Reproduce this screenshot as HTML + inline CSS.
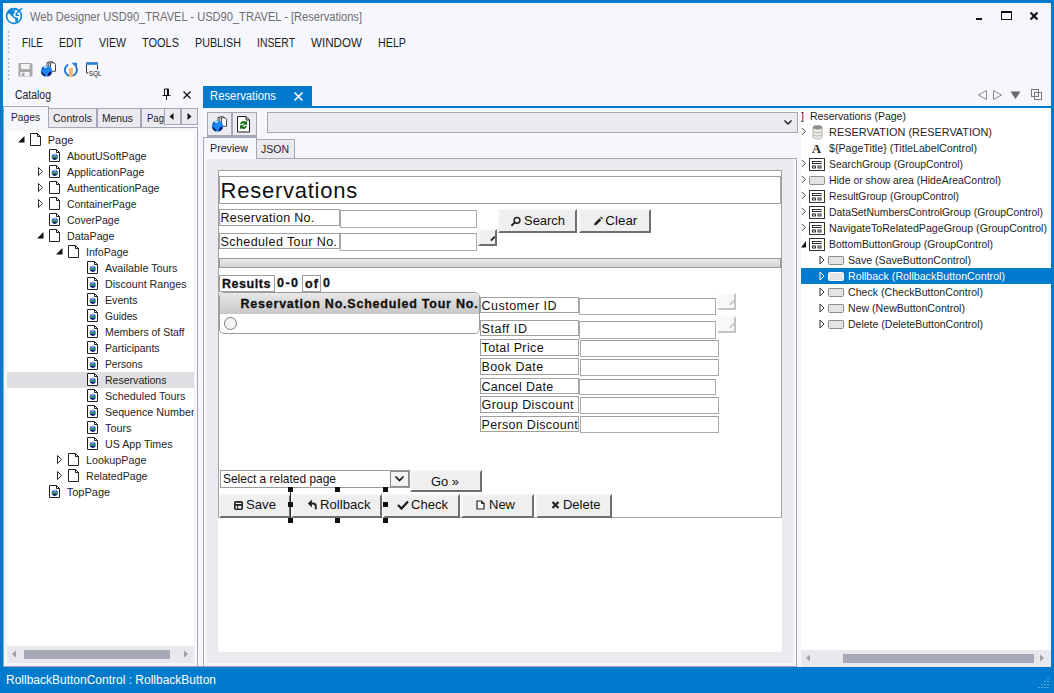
<!DOCTYPE html>
<html><head><meta charset="utf-8"><title>Web Designer</title>
<style>
html,body{margin:0;padding:0}
body{width:1054px;height:693px;overflow:hidden;background:#007acc;position:relative;font-family:'Liberation Sans',sans-serif}
div,span.t,svg{position:absolute;display:block}
span.t{white-space:pre;font-family:'Liberation Sans',sans-serif;transform-origin:0 0}
</style></head><body>
<div style="left:3px;top:3px;width:1048px;height:664px;background:#f6f6fd"></div>
<svg style="left:0px;top:0px" width="30" height="30" viewBox="0 0 30 30"><circle cx="14" cy="16" r="7.400" fill="#fff" stroke="#0f86d6" stroke-width="1.700"/>
<path d="M7.500 12 L10.500 8.800 L13 8.600 L12.500 10 L15 10.500 L14.500 13 L13.200 14.500 L14 16.500 L16.500 17.500 L18.300 18.300 L18 21 L16.500 22.800 L15.200 21.500 L15.300 19 L12.800 17.300 L9.200 13.500 L7.500 14 Z" fill="#0f86d6"/>
<path d="M13.500 9 L17.500 9.300 L16.500 10.500 L14.500 10.300Z" fill="#0f86d6"/>
<path d="M21.800 8.200 L17 13" stroke="#0f86d6" stroke-width="1.600"/><path d="M16.300 12.500 V15.300 H19" fill="none" stroke="#0f86d6" stroke-width="1.500"/></svg>
<span class="t" style="left:30px;top:8.5px;font-size:12.5px;line-height:16px;color:#6e6e6e;transform:scaleX(0.8888);">Web Designer USD90_TRAVEL - USD90_TRAVEL - [Reservations]</span>
<div style="left:976px;top:17.5px;width:6px;height:2px;background:#111"></div>
<div style="left:1001px;top:11px;width:11px;height:9px;box-sizing:border-box;border:1px solid #111;border-top-width:2px"></div>
<svg style="left:1029px;top:11px" width="10" height="10" viewBox="0 0 10 10"><path d="M1.5 1.5 L8.5 8.5 M8.5 1.5 L1.5 8.5" stroke="#111" stroke-width="2.2"/></svg>
<span class="t" style="left:22px;top:35.0px;font-size:12px;line-height:16px;color:#1e1e1e;transform:scaleX(0.8286);">FILE</span>
<span class="t" style="left:59px;top:35.0px;font-size:12px;line-height:16px;color:#1e1e1e;transform:scaleX(0.8777);">EDIT</span>
<span class="t" style="left:99px;top:35.0px;font-size:12px;line-height:16px;color:#1e1e1e;transform:scaleX(0.8803);">VIEW</span>
<span class="t" style="left:142px;top:35.0px;font-size:12px;line-height:16px;color:#1e1e1e;transform:scaleX(0.9143);">TOOLS</span>
<span class="t" style="left:195px;top:35.0px;font-size:12px;line-height:16px;color:#1e1e1e;transform:scaleX(0.8956);">PUBLISH</span>
<span class="t" style="left:257px;top:35.0px;font-size:12px;line-height:16px;color:#1e1e1e;transform:scaleX(0.8676);">INSERT</span>
<span class="t" style="left:311px;top:35.0px;font-size:12px;line-height:16px;color:#1e1e1e;transform:scaleX(0.9685);">WINDOW</span>
<span class="t" style="left:378px;top:35.0px;font-size:12px;line-height:16px;color:#1e1e1e;transform:scaleX(0.8929);">HELP</span>
<div style="left:6.5px;top:29.5px;width:3px;height:24px;background-image:radial-gradient(circle,#bcbcc6 0.9px,transparent 1.2px);background-size:3px 4px"></div>
<div style="left:6.5px;top:57px;width:3px;height:24px;background-image:radial-gradient(circle,#bcbcc6 0.9px,transparent 1.2px);background-size:3px 4px"></div>
<svg style="left:18px;top:62px" width="15" height="15" viewBox="0 0 15 15"><path d="M0.5 1h12.5l1.500 1.500v12h-14z" fill="#a8a8a8"/><rect x="3" y="2" width="8.500" height="5" fill="#f3f3f3"/><rect x="11" y="2" width="1" height="1.500" fill="#f3f3f3"/><rect x="2.500" y="10" width="9" height="4" fill="#f3f3f3"/><rect x="4" y="10.800" width="2.500" height="3.200" fill="#a8a8a8"/></svg>
<svg style="left:40px;top:61px" width="17" height="17" viewBox="0 0 17 17"><path d="M7 1.500h4l1.500 1.500v6h-5.500z" fill="#fff" stroke="#333" stroke-width="0.900"/><path d="M8.800 0.800h4l1.500 1.500v6.500h-5.500z" fill="#fff" stroke="#333" stroke-width="0.900"/><path d="M10.500 1.800h3.500l1.500 1.500v7h-5z" fill="#fff" stroke="#333" stroke-width="0.900"/>
<circle cx="6.500" cy="10" r="5.600" fill="#1b84ec"/><path d="M1 10.500c1.500 .5 2 2 3.500 2.500l1 2.500a5.600 5.600 0 0 1-4.500-5Z" fill="#0a1a78"/><path d="M8 12.500l2.500-2 1.400 1.200a5.600 5.600 0 0 1-4.400 3.800Z" fill="#0a1a78"/><path d="M2 6.500l1.500-.5 .5 1.500-1.500 1Z" fill="#123a9a"/><path d="M3.500 6.200c1-1.200 2.500-1.700 3.500-1.200s0 1.700-1.200 2s-2.300 0-2.300-.8Z" fill="#a8dcff"/></svg>
<svg style="left:63px;top:62px" width="16" height="16" viewBox="0 0 16 16"><path d="M5.200 2.600A6 6 0 1 0 12.800 4.500" fill="none" stroke="#2a7bd0" stroke-width="2"/><path d="M8.500 0.800h5.500v5.500Z" fill="#2a7bd0"/><rect x="6" y="6" width="3.800" height="9" fill="#f7b76b"/></svg>
<svg style="left:85px;top:61px" width="19" height="17" viewBox="0 0 19 17"><path d="M1 2.500h12" stroke="#2a7bd0" stroke-width="2.600"/><path d="M1.500 4v8h2M12.500 4v4.500" fill="none" stroke="#333" stroke-width="1"/></svg>
<span class="t" style="left:89px;top:69.7px;font-size:7.6px;line-height:8px;color:#111;transform:scaleX(0.8222);">SQL</span>
<span class="t" style="left:15px;top:87.0px;font-size:12px;line-height:16px;color:#1e1e1e;transform:scaleX(0.8701);">Catalog</span>
<svg style="left:161.5px;top:88px" width="9" height="13" viewBox="0 0 9 13"><path d="M2.500 1h4v6.500h-4z M0.500 7.500h8 M4.500 7.500v4.500" fill="none" stroke="#111" stroke-width="1"/><path d="M5.700 1v6.500" stroke="#111" stroke-width="1.600"/></svg>
<svg style="left:182px;top:90px" width="10" height="10" viewBox="0 0 10 10"><path d="M1.500 1.500 L8.500 8.500 M8.500 1.500 L1.500 8.500" stroke="#111" stroke-width="1.300"/></svg>
<div style="left:3px;top:127px;width:195px;height:539px;box-sizing:border-box;border:1px solid #a5a7b6;border-bottom:none"></div>
<div style="left:48px;top:108px;width:49px;height:20px;box-sizing:border-box;border:1px solid #a5a7b6;background:#eaeaef"></div>
<span class="t" style="left:53px;top:111.0px;font-size:11px;line-height:14px;color:#1e1e1e;transform:scaleX(0.9519);">Controls</span>
<div style="left:97px;top:108px;width:44px;height:20px;box-sizing:border-box;border:1px solid #a5a7b6;background:#eaeaef"></div>
<span class="t" style="left:102px;top:111.0px;font-size:11px;line-height:14px;color:#1e1e1e;transform:scaleX(0.9385);">Menus</span>
<div style="left:141px;top:108px;width:24px;height:20px;box-sizing:border-box;border:1px solid #a5a7b6;background:#eaeaef;border-right:none"></div>
<span class="t" style="left:147px;top:111.0px;font-size:11px;line-height:14px;color:#1e1e1e;transform:scaleX(0.8683);">Pag</span>
<div style="left:3px;top:106px;width:46px;height:22px;box-sizing:border-box;border:1px solid #a5a7b6;border-bottom:none;background:#f6f6fd"></div>
<span class="t" style="left:11px;top:110.0px;font-size:11px;line-height:14px;color:#1e1e1e;transform:scaleX(0.9294);">Pages</span>
<div style="left:164px;top:108px;width:17px;height:17px;box-sizing:border-box;border:1px solid #a5a7b6;background:#eaeaef"></div>
<svg style="left:164px;top:108.5px" width="16" height="16" viewBox="0 0 16 16"><path d="M9.500 4 L5.500 7.500 L9.500 11Z" fill="#111"/></svg>
<div style="left:181px;top:108px;width:17px;height:17px;box-sizing:border-box;border:1px solid #a5a7b6;background:#eaeaef"></div>
<svg style="left:181px;top:108.5px" width="16" height="16" viewBox="0 0 16 16"><path d="M6.500 4 L10.500 7.500 L6.500 11Z" fill="#111"/></svg>
<div style="left:7px;top:131px;width:187px;height:515px;background:#fff"></div>
<div style="left:7px;top:372px;width:187px;height:16px;background:#dfdfe3"></div>
<svg style="left:18px;top:136px" width="7" height="7" viewBox="0 0 7 7"><path d="M6.500 0v6.500h-6.500z" fill="#111"/></svg>
<svg style="left:29.5px;top:133px" width="11" height="13" viewBox="0 0 11 13"><path d="M0.500 0.500h7l3 3v9h-10z" fill="#fff" stroke="#222" stroke-width="1"/><path d="M7.500 0.500v3h3" fill="none" stroke="#222" stroke-width="1"/></svg>
<span class="t" style="left:47.7px;top:133.0px;font-size:11px;line-height:14px;color:#1e1e1e;">Page</span>
<svg style="left:48.5px;top:149px" width="11" height="13" viewBox="0 0 11 13"><path d="M0.500 0.500h7l3 3v9h-10z" fill="#fff" stroke="#222" stroke-width="1"/><path d="M7.500 0.500v3h3" fill="none" stroke="#222" stroke-width="1"/><circle cx="5.700" cy="7.800" r="3" fill="#1d4fc0"/><path d="M2.900 7.300h5.600v1.300h-5.600z" fill="#3fae45"/><path d="M3 9a3 3 0 0 0 5.400 0Z" fill="#0a1a66"/><path d="M4.200 5.400h2.800v1h-2.800z" fill="#e8f4ff"/></svg>
<span class="t" style="left:66.7px;top:149.0px;font-size:11px;line-height:14px;color:#1e1e1e;transform:scaleX(0.9701);">AboutUSoftPage</span>
<svg style="left:37.7px;top:166.5px" width="6" height="10" viewBox="0 0 6 10"><path d="M0.500 0.500l4 4-4 4z" fill="#fff" stroke="#333" stroke-width="1"/></svg>
<svg style="left:48.5px;top:165px" width="11" height="13" viewBox="0 0 11 13"><path d="M0.500 0.500h7l3 3v9h-10z" fill="#fff" stroke="#222" stroke-width="1"/><path d="M7.500 0.500v3h3" fill="none" stroke="#222" stroke-width="1"/><circle cx="5.700" cy="7.800" r="3" fill="#1d4fc0"/><path d="M2.900 7.300h5.600v1.300h-5.600z" fill="#3fae45"/><path d="M3 9a3 3 0 0 0 5.400 0Z" fill="#0a1a66"/><path d="M4.200 5.400h2.800v1h-2.800z" fill="#e8f4ff"/></svg>
<span class="t" style="left:66.7px;top:165.0px;font-size:11px;line-height:14px;color:#1e1e1e;transform:scaleX(0.9747);">ApplicationPage</span>
<svg style="left:37.7px;top:182.5px" width="6" height="10" viewBox="0 0 6 10"><path d="M0.500 0.500l4 4-4 4z" fill="#fff" stroke="#333" stroke-width="1"/></svg>
<svg style="left:48.5px;top:181px" width="11" height="13" viewBox="0 0 11 13"><path d="M0.500 0.500h7l3 3v9h-10z" fill="#fff" stroke="#222" stroke-width="1"/><path d="M7.500 0.500v3h3" fill="none" stroke="#222" stroke-width="1"/></svg>
<span class="t" style="left:66.7px;top:181.0px;font-size:11px;line-height:14px;color:#1e1e1e;transform:scaleX(0.9694);">AuthenticationPage</span>
<svg style="left:37.7px;top:198.5px" width="6" height="10" viewBox="0 0 6 10"><path d="M0.500 0.500l4 4-4 4z" fill="#fff" stroke="#333" stroke-width="1"/></svg>
<svg style="left:48.5px;top:197px" width="11" height="13" viewBox="0 0 11 13"><path d="M0.500 0.500h7l3 3v9h-10z" fill="#fff" stroke="#222" stroke-width="1"/><path d="M7.500 0.500v3h3" fill="none" stroke="#222" stroke-width="1"/></svg>
<span class="t" style="left:66.7px;top:197.0px;font-size:11px;line-height:14px;color:#1e1e1e;transform:scaleX(0.9470);">ContainerPage</span>
<svg style="left:48.5px;top:213px" width="11" height="13" viewBox="0 0 11 13"><path d="M0.500 0.500h7l3 3v9h-10z" fill="#fff" stroke="#222" stroke-width="1"/><path d="M7.500 0.500v3h3" fill="none" stroke="#222" stroke-width="1"/><circle cx="5.700" cy="7.800" r="3" fill="#1d4fc0"/><path d="M2.900 7.300h5.600v1.300h-5.600z" fill="#3fae45"/><path d="M3 9a3 3 0 0 0 5.400 0Z" fill="#0a1a66"/><path d="M4.200 5.400h2.800v1h-2.800z" fill="#e8f4ff"/></svg>
<span class="t" style="left:66.7px;top:213.0px;font-size:11px;line-height:14px;color:#1e1e1e;transform:scaleX(0.9537);">CoverPage</span>
<svg style="left:37px;top:232px" width="7" height="7" viewBox="0 0 7 7"><path d="M6.500 0v6.500h-6.500z" fill="#111"/></svg>
<svg style="left:48.5px;top:229px" width="11" height="13" viewBox="0 0 11 13"><path d="M0.500 0.500h7l3 3v9h-10z" fill="#fff" stroke="#222" stroke-width="1"/><path d="M7.500 0.500v3h3" fill="none" stroke="#222" stroke-width="1"/></svg>
<span class="t" style="left:66.7px;top:229.0px;font-size:11px;line-height:14px;color:#1e1e1e;transform:scaleX(0.9706);">DataPage</span>
<svg style="left:56px;top:248px" width="7" height="7" viewBox="0 0 7 7"><path d="M6.500 0v6.500h-6.500z" fill="#111"/></svg>
<svg style="left:67.5px;top:245px" width="11" height="13" viewBox="0 0 11 13"><path d="M0.500 0.500h7l3 3v9h-10z" fill="#fff" stroke="#222" stroke-width="1"/><path d="M7.500 0.500v3h3" fill="none" stroke="#222" stroke-width="1"/></svg>
<span class="t" style="left:85.7px;top:245.0px;font-size:11px;line-height:14px;color:#1e1e1e;transform:scaleX(0.9649);">InfoPage</span>
<svg style="left:86.5px;top:261px" width="11" height="13" viewBox="0 0 11 13"><path d="M0.500 0.500h7l3 3v9h-10z" fill="#fff" stroke="#222" stroke-width="1"/><path d="M7.500 0.500v3h3" fill="none" stroke="#222" stroke-width="1"/><circle cx="5.700" cy="7.800" r="3" fill="#1d4fc0"/><path d="M2.900 7.300h5.600v1.300h-5.600z" fill="#3fae45"/><path d="M3 9a3 3 0 0 0 5.400 0Z" fill="#0a1a66"/><path d="M4.200 5.400h2.800v1h-2.800z" fill="#e8f4ff"/></svg>
<span class="t" style="left:104.7px;top:261.0px;font-size:11px;line-height:14px;color:#1e1e1e;transform:scaleX(0.9770);">Available Tours</span>
<svg style="left:86.5px;top:277px" width="11" height="13" viewBox="0 0 11 13"><path d="M0.500 0.500h7l3 3v9h-10z" fill="#fff" stroke="#222" stroke-width="1"/><path d="M7.500 0.500v3h3" fill="none" stroke="#222" stroke-width="1"/><circle cx="5.700" cy="7.800" r="3" fill="#1d4fc0"/><path d="M2.900 7.300h5.600v1.300h-5.600z" fill="#3fae45"/><path d="M3 9a3 3 0 0 0 5.400 0Z" fill="#0a1a66"/><path d="M4.200 5.400h2.800v1h-2.800z" fill="#e8f4ff"/></svg>
<span class="t" style="left:104.7px;top:277.0px;font-size:11px;line-height:14px;color:#1e1e1e;transform:scaleX(0.9728);">Discount Ranges</span>
<svg style="left:86.5px;top:293px" width="11" height="13" viewBox="0 0 11 13"><path d="M0.500 0.500h7l3 3v9h-10z" fill="#fff" stroke="#222" stroke-width="1"/><path d="M7.500 0.500v3h3" fill="none" stroke="#222" stroke-width="1"/><circle cx="5.700" cy="7.800" r="3" fill="#1d4fc0"/><path d="M2.900 7.300h5.600v1.300h-5.600z" fill="#3fae45"/><path d="M3 9a3 3 0 0 0 5.400 0Z" fill="#0a1a66"/><path d="M4.200 5.400h2.800v1h-2.800z" fill="#e8f4ff"/></svg>
<span class="t" style="left:104.7px;top:293.0px;font-size:11px;line-height:14px;color:#1e1e1e;transform:scaleX(0.9661);">Events</span>
<svg style="left:86.5px;top:309px" width="11" height="13" viewBox="0 0 11 13"><path d="M0.500 0.500h7l3 3v9h-10z" fill="#fff" stroke="#222" stroke-width="1"/><path d="M7.500 0.500v3h3" fill="none" stroke="#222" stroke-width="1"/><circle cx="5.700" cy="7.800" r="3" fill="#1d4fc0"/><path d="M2.900 7.300h5.600v1.300h-5.600z" fill="#3fae45"/><path d="M3 9a3 3 0 0 0 5.400 0Z" fill="#0a1a66"/><path d="M4.200 5.400h2.800v1h-2.800z" fill="#e8f4ff"/></svg>
<span class="t" style="left:104.7px;top:309.0px;font-size:11px;line-height:14px;color:#1e1e1e;transform:scaleX(0.9323);">Guides</span>
<svg style="left:86.5px;top:325px" width="11" height="13" viewBox="0 0 11 13"><path d="M0.500 0.500h7l3 3v9h-10z" fill="#fff" stroke="#222" stroke-width="1"/><path d="M7.500 0.500v3h3" fill="none" stroke="#222" stroke-width="1"/><circle cx="5.700" cy="7.800" r="3" fill="#1d4fc0"/><path d="M2.900 7.300h5.600v1.300h-5.600z" fill="#3fae45"/><path d="M3 9a3 3 0 0 0 5.400 0Z" fill="#0a1a66"/><path d="M4.200 5.400h2.800v1h-2.800z" fill="#e8f4ff"/></svg>
<span class="t" style="left:104.7px;top:325.0px;font-size:11px;line-height:14px;color:#1e1e1e;transform:scaleX(0.9514);">Members of Staff</span>
<svg style="left:86.5px;top:341px" width="11" height="13" viewBox="0 0 11 13"><path d="M0.500 0.500h7l3 3v9h-10z" fill="#fff" stroke="#222" stroke-width="1"/><path d="M7.500 0.500v3h3" fill="none" stroke="#222" stroke-width="1"/><circle cx="5.700" cy="7.800" r="3" fill="#1d4fc0"/><path d="M2.900 7.300h5.600v1.300h-5.600z" fill="#3fae45"/><path d="M3 9a3 3 0 0 0 5.400 0Z" fill="#0a1a66"/><path d="M4.200 5.400h2.800v1h-2.800z" fill="#e8f4ff"/></svg>
<span class="t" style="left:104.7px;top:341.0px;font-size:11px;line-height:14px;color:#1e1e1e;transform:scaleX(0.9481);">Participants</span>
<svg style="left:86.5px;top:357px" width="11" height="13" viewBox="0 0 11 13"><path d="M0.500 0.500h7l3 3v9h-10z" fill="#fff" stroke="#222" stroke-width="1"/><path d="M7.500 0.500v3h3" fill="none" stroke="#222" stroke-width="1"/><circle cx="5.700" cy="7.800" r="3" fill="#1d4fc0"/><path d="M2.900 7.300h5.600v1.300h-5.600z" fill="#3fae45"/><path d="M3 9a3 3 0 0 0 5.400 0Z" fill="#0a1a66"/><path d="M4.200 5.400h2.800v1h-2.800z" fill="#e8f4ff"/></svg>
<span class="t" style="left:104.7px;top:357.0px;font-size:11px;line-height:14px;color:#1e1e1e;transform:scaleX(0.9292);">Persons</span>
<svg style="left:86.5px;top:373px" width="11" height="13" viewBox="0 0 11 13"><path d="M0.500 0.500h7l3 3v9h-10z" fill="#fff" stroke="#222" stroke-width="1"/><path d="M7.500 0.500v3h3" fill="none" stroke="#222" stroke-width="1"/><circle cx="5.700" cy="7.800" r="3" fill="#1d4fc0"/><path d="M2.900 7.300h5.600v1.300h-5.600z" fill="#3fae45"/><path d="M3 9a3 3 0 0 0 5.400 0Z" fill="#0a1a66"/><path d="M4.200 5.400h2.800v1h-2.800z" fill="#e8f4ff"/></svg>
<span class="t" style="left:104.7px;top:373.0px;font-size:11px;line-height:14px;color:#1e1e1e;transform:scaleX(0.9579);">Reservations</span>
<svg style="left:86.5px;top:389px" width="11" height="13" viewBox="0 0 11 13"><path d="M0.500 0.500h7l3 3v9h-10z" fill="#fff" stroke="#222" stroke-width="1"/><path d="M7.500 0.500v3h3" fill="none" stroke="#222" stroke-width="1"/><circle cx="5.700" cy="7.800" r="3" fill="#1d4fc0"/><path d="M2.900 7.300h5.600v1.300h-5.600z" fill="#3fae45"/><path d="M3 9a3 3 0 0 0 5.400 0Z" fill="#0a1a66"/><path d="M4.200 5.400h2.800v1h-2.800z" fill="#e8f4ff"/></svg>
<span class="t" style="left:104.7px;top:389.0px;font-size:11px;line-height:14px;color:#1e1e1e;transform:scaleX(0.9847);">Scheduled Tours</span>
<svg style="left:86.5px;top:405px" width="11" height="13" viewBox="0 0 11 13"><path d="M0.500 0.500h7l3 3v9h-10z" fill="#fff" stroke="#222" stroke-width="1"/><path d="M7.500 0.500v3h3" fill="none" stroke="#222" stroke-width="1"/><circle cx="5.700" cy="7.800" r="3" fill="#1d4fc0"/><path d="M2.900 7.300h5.600v1.300h-5.600z" fill="#3fae45"/><path d="M3 9a3 3 0 0 0 5.400 0Z" fill="#0a1a66"/><path d="M4.200 5.400h2.800v1h-2.800z" fill="#e8f4ff"/></svg>
<span class="t" style="left:104.7px;top:405.0px;font-size:11px;line-height:14px;color:#1e1e1e;transform:scaleX(0.9756);">Sequence Number</span>
<svg style="left:86.5px;top:421px" width="11" height="13" viewBox="0 0 11 13"><path d="M0.500 0.500h7l3 3v9h-10z" fill="#fff" stroke="#222" stroke-width="1"/><path d="M7.500 0.500v3h3" fill="none" stroke="#222" stroke-width="1"/><circle cx="5.700" cy="7.800" r="3" fill="#1d4fc0"/><path d="M2.900 7.300h5.600v1.300h-5.600z" fill="#3fae45"/><path d="M3 9a3 3 0 0 0 5.400 0Z" fill="#0a1a66"/><path d="M4.200 5.400h2.800v1h-2.800z" fill="#e8f4ff"/></svg>
<span class="t" style="left:104.7px;top:421.0px;font-size:11px;line-height:14px;color:#1e1e1e;transform:scaleX(0.9849);">Tours</span>
<svg style="left:86.5px;top:437px" width="11" height="13" viewBox="0 0 11 13"><path d="M0.500 0.500h7l3 3v9h-10z" fill="#fff" stroke="#222" stroke-width="1"/><path d="M7.500 0.500v3h3" fill="none" stroke="#222" stroke-width="1"/><circle cx="5.700" cy="7.800" r="3" fill="#1d4fc0"/><path d="M2.900 7.300h5.600v1.300h-5.600z" fill="#3fae45"/><path d="M3 9a3 3 0 0 0 5.400 0Z" fill="#0a1a66"/><path d="M4.200 5.400h2.800v1h-2.800z" fill="#e8f4ff"/></svg>
<span class="t" style="left:104.7px;top:437.0px;font-size:11px;line-height:14px;color:#1e1e1e;transform:scaleX(0.9684);">US App Times</span>
<svg style="left:56.7px;top:454.5px" width="6" height="10" viewBox="0 0 6 10"><path d="M0.500 0.500l4 4-4 4z" fill="#fff" stroke="#333" stroke-width="1"/></svg>
<svg style="left:67.5px;top:453px" width="11" height="13" viewBox="0 0 11 13"><path d="M0.500 0.500h7l3 3v9h-10z" fill="#fff" stroke="#222" stroke-width="1"/><path d="M7.500 0.500v3h3" fill="none" stroke="#222" stroke-width="1"/></svg>
<span class="t" style="left:85.7px;top:453.0px;font-size:11px;line-height:14px;color:#1e1e1e;transform:scaleX(0.9793);">LookupPage</span>
<svg style="left:56.7px;top:470.5px" width="6" height="10" viewBox="0 0 6 10"><path d="M0.500 0.500l4 4-4 4z" fill="#fff" stroke="#333" stroke-width="1"/></svg>
<svg style="left:67.5px;top:469px" width="11" height="13" viewBox="0 0 11 13"><path d="M0.500 0.500h7l3 3v9h-10z" fill="#fff" stroke="#222" stroke-width="1"/><path d="M7.500 0.500v3h3" fill="none" stroke="#222" stroke-width="1"/></svg>
<span class="t" style="left:85.7px;top:469.0px;font-size:11px;line-height:14px;color:#1e1e1e;transform:scaleX(0.9668);">RelatedPage</span>
<svg style="left:48.5px;top:485px" width="11" height="13" viewBox="0 0 11 13"><path d="M0.500 0.500h7l3 3v9h-10z" fill="#fff" stroke="#222" stroke-width="1"/><path d="M7.500 0.500v3h3" fill="none" stroke="#222" stroke-width="1"/><circle cx="5.700" cy="7.800" r="3" fill="#1d4fc0"/><path d="M2.900 7.300h5.600v1.300h-5.600z" fill="#3fae45"/><path d="M3 9a3 3 0 0 0 5.400 0Z" fill="#0a1a66"/><path d="M4.200 5.400h2.800v1h-2.800z" fill="#e8f4ff"/></svg>
<span class="t" style="left:66.7px;top:485.0px;font-size:11px;line-height:14px;color:#1e1e1e;letter-spacing:0.009px;">TopPage</span>
<div style="left:194px;top:131px;width:2px;height:515px;background:#f6f6fd"></div>
<div style="left:7px;top:646px;width:187px;height:17px;background:#e8e8ed"></div>
<div style="left:24px;top:650px;width:146px;height:9px;background:#a7a9b6"></div>
<svg style="left:10px;top:649px" width="8" height="10" viewBox="0 0 8 10"><path d="M6 1.500 L2 5 L6 8.500Z" fill="#a0a0aa"/></svg>
<svg style="left:182px;top:649px" width="8" height="10" viewBox="0 0 8 10"><path d="M2 1.500 L6 5 L2 8.500Z" fill="#a0a0aa"/></svg>
<div style="left:203px;top:86px;width:109px;height:21px;background:#007acc"></div>
<span class="t" style="left:210px;top:88.0px;font-size:12px;line-height:16px;color:#fff;transform:scaleX(0.9424);">Reservations</span>
<svg style="left:293px;top:91px" width="11" height="11" viewBox="0 0 11 11"><path d="M1.500 1.500 L9.500 9.500 M9.500 1.500 L1.500 9.500" stroke="#fff" stroke-width="1.600"/></svg>
<div style="left:203px;top:106px;width:848px;height:2px;background:#007acc"></div>
<svg style="left:977px;top:89px" width="11" height="12" viewBox="0 0 11 12"><path d="M9.500 1.500 L1.500 6 L9.500 10.500Z" fill="none" stroke="#8a8a8a" stroke-width="1"/></svg>
<svg style="left:992px;top:89px" width="11" height="12" viewBox="0 0 11 12"><path d="M1.500 1.500 L9.500 6 L1.500 10.500Z" fill="none" stroke="#8a8a8a" stroke-width="1"/></svg>
<svg style="left:1010px;top:91px" width="11" height="8" viewBox="0 0 11 8"><path d="M0.500 0.500h10l-5 7.500z" fill="#6a6a6a"/></svg>
<svg style="left:1031px;top:89px" width="12" height="12" viewBox="0 0 12 12"><rect x="0.500" y="0.500" width="7" height="7" fill="none" stroke="#777" stroke-width="1"/><rect x="3.500" y="3.500" width="7" height="7" fill="none" stroke="#777" stroke-width="1"/></svg>
<div style="left:203px;top:137px;width:1px;height:530px;background:#a5a7b6"></div>
<div style="left:207px;top:112px;width:25px;height:25px;box-sizing:border-box;border:1px solid #a5a7b6;border-bottom-width:2px;background:#eaeaef"></div>
<div style="left:232px;top:112px;width:25px;height:25px;box-sizing:border-box;border:1px solid #a5a7b6;border-bottom-width:2px;background:#eaeaef"></div>
<svg style="left:211px;top:116px" width="17" height="17" viewBox="0 0 17 17"><path d="M7 1.500h4l1.500 1.500v6h-5.500z" fill="#fff" stroke="#333" stroke-width="0.900"/><path d="M8.800 0.800h4l1.500 1.500v6.500h-5.500z" fill="#fff" stroke="#333" stroke-width="0.900"/><path d="M10.500 1.800h3.500l1.500 1.500v7h-5z" fill="#fff" stroke="#333" stroke-width="0.900"/>
<circle cx="6.500" cy="10" r="5.600" fill="#1b84ec"/><path d="M1 10.500c1.500 .5 2 2 3.500 2.500l1 2.500a5.600 5.600 0 0 1-4.500-5Z" fill="#0a1a78"/><path d="M8 12.500l2.500-2 1.400 1.200a5.600 5.600 0 0 1-4.400 3.800Z" fill="#0a1a78"/><path d="M2 6.500l1.500-.5 .5 1.500-1.500 1Z" fill="#123a9a"/><path d="M3.500 6.200c1-1.200 2.500-1.700 3.500-1.200s0 1.700-1.200 2s-2.300 0-2.300-.8Z" fill="#a8dcff"/></svg>
<svg style="left:237px;top:115.5px" width="14" height="17" viewBox="0 0 14 17"><path d="M0.500 0.500h8.500l3.500 3.500v12h-12z" fill="#fff" stroke="#222" stroke-width="1"/><path d="M9 0.500v3.500h3.500" fill="none" stroke="#222"/><path d="M3 8.200a3.600 3.600 0 0 1 5.800-2.400l1.200-1.200v4.200h-4.200l1.300-1.300a2 2 0 0 0-2.600 .7Z" fill="#1a6e1e"/><path d="M10 9.800a3.600 3.600 0 0 1-5.800 2.400l-1.200 1.200v-4.200h4.200l-1.300 1.300a2 2 0 0 0 2.600-.7Z" fill="#1a6e1e"/></svg>
<div style="left:267px;top:112px;width:531px;height:21px;box-sizing:border-box;border:1px solid #a5a7b6;background:#eaeaef"></div>
<svg style="left:783px;top:119px" width="10" height="8" viewBox="0 0 10 8"><path d="M1.500 1.500 L5 5 L8.500 1.500" fill="none" stroke="#222" stroke-width="1.500"/></svg>
<div style="left:256px;top:139px;width:39px;height:20px;box-sizing:border-box;border:1px solid #a5a7b6;background:#eaeaef"></div>
<span class="t" style="left:260.5px;top:141.5px;font-size:11px;line-height:14px;color:#1e1e1e;transform:scaleX(0.9542);">JSON</span>
<div style="left:203px;top:137px;width:54px;height:22px;box-sizing:border-box;border:1px solid #a5a7b6;border-bottom:none;background:#f6f6fd"></div>
<span class="t" style="left:210px;top:141.0px;font-size:11px;line-height:14px;color:#1e1e1e;transform:scaleX(0.9712);">Preview</span>
<div style="left:256px;top:158px;width:541px;height:1px;background:#a5a7b6"></div>
<div style="left:207px;top:159px;width:586px;height:504px;background:#eaeaef"></div>
<div style="left:218px;top:170px;width:564px;height:482px;background:#fff"></div>
<div style="left:218px;top:170px;width:564px;height:348px;box-sizing:border-box;border:1px solid #a2a2a2;background:#fff"></div>
<div style="left:219px;top:176px;width:562px;height:28px;box-sizing:border-box;border:1px solid #a0a0a0;background:#fff"></div>
<span class="t" style="left:220.5px;top:176.5px;font-size:22px;line-height:28px;color:#111;letter-spacing:0.759px;">Reservations</span>
<div style="left:219px;top:209px;width:121px;height:17px;box-sizing:border-box;border:1px solid #a0a0a0;background:#fff"></div>
<span class="t" style="left:220.5px;top:210.0px;font-size:12.5px;line-height:16px;color:#111;letter-spacing:0.292px;">Reservation No.</span>
<div style="left:340px;top:210px;width:137px;height:18px;box-sizing:border-box;border:1px solid #ababab;border-top-color:#a0a0a0;background:#fff"></div>
<div style="left:219px;top:233px;width:121px;height:16px;box-sizing:border-box;border:1px solid #a0a0a0;background:#fff"></div>
<span class="t" style="left:220.5px;top:233.5px;font-size:12.5px;line-height:16px;color:#111;letter-spacing:0.412px;">Scheduled Tour No.</span>
<div style="left:340px;top:233px;width:137px;height:18px;box-sizing:border-box;border:1px solid #ababab;border-top-color:#a0a0a0;background:#fff"></div>
<div style="left:478px;top:229px;width:19px;height:17px;box-sizing:border-box;border:2px solid;border-color:#f4f4f4 #6f6f6f #6f6f6f #f4f4f4;background:#efefef"></div>
<svg style="left:490px;top:236px" width="6" height="6" viewBox="0 0 6 6"><path d="M0.800 4.700 L4.800 0.700" stroke="#222" stroke-width="1.8" fill="none"/></svg>
<div style="left:498px;top:209px;width:79px;height:24px;box-sizing:border-box;border:2px solid;border-color:#f4f4f4 #6f6f6f #6f6f6f #f4f4f4;background:#efefef"></div>
<svg style="left:510px;top:216px" width="12" height="11" viewBox="0 0 12 11"><circle cx="7" cy="4.300" r="2.900" fill="none" stroke="#222" stroke-width="1.500"/><path d="M4.900 6.400 L1.400 9.800" stroke="#222" stroke-width="1.900"/></svg>
<span class="t" style="left:523.7px;top:212.0px;font-size:13.33px;line-height:17px;color:#111;transform:scaleX(0.9708);">Search</span>
<div style="left:579px;top:209px;width:72px;height:24px;box-sizing:border-box;border:2px solid;border-color:#f4f4f4 #6f6f6f #6f6f6f #f4f4f4;background:#efefef"></div>
<svg style="left:593px;top:216px" width="11" height="10" viewBox="0 0 11 10"><path d="M1 9.500l.7-2.600 4.600-4.600 1.900 1.900-4.600 4.600z" fill="#222"/><path d="M7.100 1.500l.9-.9 1.900 1.900-.9 .9z" fill="#222"/></svg>
<span class="t" style="left:605.3px;top:212.0px;font-size:13.33px;line-height:17px;color:#111;letter-spacing:0.028px;">Clear</span>
<div style="left:219px;top:258px;width:562px;height:10px;box-sizing:border-box;border:1px solid #9a9a9a;background:linear-gradient(#e9e9e9,#d6d6d6)"></div>
<div style="left:219px;top:275px;width:56px;height:17px;box-sizing:border-box;border:1px solid #a0a0a0;background:#fff"></div>
<span class="t" style="left:222px;top:276.0px;font-size:12.5px;line-height:16px;color:#111;font-weight:bold;letter-spacing:0.549px;-webkit-text-stroke:0.300px #111;">Results</span>
<span class="t" style="left:277px;top:274.5px;font-size:12.5px;line-height:16px;color:#111;font-weight:bold;letter-spacing:1.474px;-webkit-text-stroke:0.300px #111;">0-0</span>
<div style="left:302px;top:275px;width:19px;height:17px;box-sizing:border-box;border:1px solid #a0a0a0;background:#fff"></div>
<span class="t" style="left:305px;top:276.0px;font-size:12.5px;line-height:16px;color:#111;font-weight:bold;letter-spacing:1.094px;-webkit-text-stroke:0.300px #111;">of</span>
<span class="t" style="left:323px;top:274.5px;font-size:12.5px;line-height:16px;color:#111;font-weight:bold;letter-spacing:1.547px;-webkit-text-stroke:0.300px #111;">0</span>
<div style="left:219px;top:292px;width:261px;height:42px;box-sizing:border-box;border:1px solid #9a9a9a;border-radius:5px;background:#fff;overflow:hidden"><div style="left:0;top:0;width:261px;height:21px;background:linear-gradient(#e9e9e9,#d9d9d9 45%,#c8c8c8)"></div></div>
<span class="t" style="left:240.5px;top:296.0px;font-size:12.5px;line-height:16px;color:#111;font-weight:bold;letter-spacing:0.778px;-webkit-text-stroke:0.300px #111;">Reservation No.Scheduled Tour No.</span>
<div style="left:224px;top:317px;width:13px;height:13px;box-sizing:border-box;border:1px solid #777;border-radius:50%;background:#f4f4f4"></div>
<div style="left:480px;top:297px;width:99px;height:16px;box-sizing:border-box;border:1px solid #a0a0a0;background:#fff"></div>
<span class="t" style="left:481.5px;top:297.5px;font-size:12.5px;line-height:16px;color:#111;letter-spacing:0.486px;">Customer ID</span>
<div style="left:579px;top:298px;width:137px;height:17px;box-sizing:border-box;border:1px solid #ababab;border-top-color:#a0a0a0;background:#fff"></div>
<div style="left:480px;top:320px;width:99px;height:16px;box-sizing:border-box;border:1px solid #a0a0a0;background:#fff"></div>
<span class="t" style="left:481.5px;top:320.5px;font-size:12.5px;line-height:16px;color:#111;letter-spacing:0.566px;">Staff ID</span>
<div style="left:579px;top:321px;width:137px;height:18px;box-sizing:border-box;border:1px solid #ababab;border-top-color:#a0a0a0;background:#fff"></div>
<div style="left:480px;top:339px;width:99px;height:17px;box-sizing:border-box;border:1px solid #a0a0a0;background:#fff"></div>
<span class="t" style="left:481.5px;top:340.0px;font-size:12.5px;line-height:16px;color:#111;letter-spacing:0.376px;">Total Price</span>
<div style="left:580px;top:340px;width:139px;height:17px;box-sizing:border-box;border:1px solid #ababab;border-top-color:#a0a0a0;background:#fff"></div>
<div style="left:480px;top:358px;width:99px;height:17px;box-sizing:border-box;border:1px solid #a0a0a0;background:#fff"></div>
<span class="t" style="left:481.5px;top:359.0px;font-size:12.5px;line-height:16px;color:#111;letter-spacing:0.403px;">Book Date</span>
<div style="left:580px;top:359px;width:139px;height:17px;box-sizing:border-box;border:1px solid #ababab;border-top-color:#a0a0a0;background:#fff"></div>
<div style="left:480px;top:378px;width:99px;height:16px;box-sizing:border-box;border:1px solid #a0a0a0;background:#fff"></div>
<span class="t" style="left:481.5px;top:378.5px;font-size:12.5px;line-height:16px;color:#111;letter-spacing:0.291px;">Cancel Date</span>
<div style="left:579px;top:379px;width:137px;height:16px;box-sizing:border-box;border:1px solid #ababab;border-top-color:#a0a0a0;background:#fff"></div>
<div style="left:480px;top:396px;width:99px;height:17px;box-sizing:border-box;border:1px solid #a0a0a0;background:#fff"></div>
<span class="t" style="left:481.5px;top:397.0px;font-size:12.5px;line-height:16px;color:#111;letter-spacing:0.403px;">Group Discount</span>
<div style="left:580px;top:397px;width:139px;height:17px;box-sizing:border-box;border:1px solid #ababab;border-top-color:#a0a0a0;background:#fff"></div>
<div style="left:480px;top:416px;width:99px;height:16px;box-sizing:border-box;border:1px solid #a0a0a0;background:#fff"></div>
<span class="t" style="left:481.5px;top:416.5px;font-size:12.5px;line-height:16px;color:#111;letter-spacing:0.319px;">Person Discount</span>
<div style="left:580px;top:416px;width:139px;height:17px;box-sizing:border-box;border:1px solid #ababab;border-top-color:#a0a0a0;background:#fff"></div>
<div style="left:717px;top:293px;width:19px;height:17px;box-sizing:border-box;border:2px solid;border-color:#fbfbfb #c4c4c4 #c4c4c4 #fbfbfb;background:#f8f8f8"></div>
<svg style="left:729px;top:300px" width="6" height="6" viewBox="0 0 6 6"><path d="M0.800 4.700 L4.800 0.700" stroke="#b8b8b8" stroke-width="1.3" fill="none"/></svg>
<div style="left:717px;top:316px;width:19px;height:17px;box-sizing:border-box;border:2px solid;border-color:#fbfbfb #c4c4c4 #c4c4c4 #fbfbfb;background:#f8f8f8"></div>
<svg style="left:729px;top:323px" width="6" height="6" viewBox="0 0 6 6"><path d="M0.800 4.700 L4.800 0.700" stroke="#b8b8b8" stroke-width="1.3" fill="none"/></svg>
<div style="left:220px;top:470px;width:190px;height:18px;box-sizing:border-box;border:1px solid #9a9a9a;background:#fff"></div>
<span class="t" style="left:223px;top:470.0px;font-size:13.33px;line-height:17px;color:#111;transform:scaleX(0.8970);">Select a related page</span>
<div style="left:390px;top:471px;width:19px;height:16px;box-sizing:border-box;border:1px solid #8a8a8a;background:#f3f3f3"></div>
<svg style="left:394px;top:475px" width="11" height="8" viewBox="0 0 11 8"><path d="M1.500 1.500 L5.500 5.500 L9.500 1.500" fill="none" stroke="#111" stroke-width="1.600"/></svg>
<div style="left:410px;top:470px;width:72px;height:22px;box-sizing:border-box;border:2px solid;border-color:#f4f4f4 #6f6f6f #6f6f6f #f4f4f4;background:#efefef"></div>
<span class="t" style="left:430.7px;top:473.0px;font-size:13.33px;line-height:17px;color:#111;transform:scaleX(0.9686);">Go »</span>
<div style="left:219px;top:494px;width:72px;height:24px;box-sizing:border-box;border:2px solid;border-color:#f4f4f4 #6f6f6f #6f6f6f #f4f4f4;background:#efefef"></div>
<svg style="left:233px;top:500px" width="11" height="11" viewBox="0 0 11 11"><rect x="1" y="1" width="9" height="9" rx="1.800" fill="#222"/><rect x="2.600" y="2.800" width="5.800" height="1.200" fill="#efefef"/><rect x="2.600" y="5.800" width="1.600" height="2.800" fill="#efefef"/><rect x="5.200" y="5.800" width="3.200" height="2.800" fill="#efefef"/></svg>
<span class="t" style="left:245.7px;top:496.0px;font-size:13.33px;line-height:17px;color:#111;transform:scaleX(0.9871);">Save</span>
<div style="left:291px;top:494px;width:91px;height:24px;box-sizing:border-box;border:2px solid;border-color:#f4f4f4 #6f6f6f #6f6f6f #f4f4f4;background:#efefef"></div>
<svg style="left:307px;top:499px" width="10" height="11" viewBox="0 0 10 11"><path d="M4.800 0.500 L0.800 4.500 L4.800 8.500z" fill="#222"/><path d="M3.500 4.500h2.500a2.800 2.800 0 0 1 2.800 2.800v3" fill="none" stroke="#222" stroke-width="1.900"/></svg>
<span class="t" style="left:319.7px;top:496.0px;font-size:13.33px;line-height:17px;color:#111;transform:scaleX(0.9878);">Rollback</span>
<div style="left:383px;top:494px;width:77px;height:24px;box-sizing:border-box;border:2px solid;border-color:#f4f4f4 #6f6f6f #6f6f6f #f4f4f4;background:#efefef"></div>
<svg style="left:397px;top:499px" width="12" height="11" viewBox="0 0 12 11"><path d="M1 6 L4.500 9.500 L11 2.500" fill="none" stroke="#222" stroke-width="2.400"/></svg>
<span class="t" style="left:410.7px;top:496.0px;font-size:13.33px;line-height:17px;color:#111;transform:scaleX(0.9793);">Check</span>
<div style="left:461px;top:494px;width:73px;height:24px;box-sizing:border-box;border:2px solid;border-color:#f4f4f4 #6f6f6f #6f6f6f #f4f4f4;background:#efefef"></div>
<svg style="left:476px;top:500px" width="9" height="10" viewBox="0 0 9 10"><path d="M1 1h4.500l2.500 2.500v5.500h-7z" fill="#fff" stroke="#222" stroke-width="1.200"/><path d="M5.500 1v2.500h2.500" fill="none" stroke="#222" stroke-width="1"/></svg>
<span class="t" style="left:488.7px;top:496.0px;font-size:13.33px;line-height:17px;color:#111;transform:scaleX(0.9748);">New</span>
<div style="left:536px;top:494px;width:76px;height:24px;box-sizing:border-box;border:2px solid;border-color:#f4f4f4 #6f6f6f #6f6f6f #f4f4f4;background:#efefef"></div>
<svg style="left:551px;top:500px" width="9" height="10" viewBox="0 0 9 10"><path d="M1.500 2 L7.500 8 M7.500 2 L1.500 8" stroke="#222" stroke-width="2.200"/></svg>
<span class="t" style="left:562.7px;top:496.0px;font-size:13.33px;line-height:17px;color:#111;transform:scaleX(0.9732);">Delete</span>
<div style="left:290px;top:492px;width:1px;height:26px;background:#333"></div>
<div style="left:287.5px;top:487px;width:5px;height:5px;background:#111"></div>
<div style="left:287.5px;top:517.5px;width:5px;height:5px;background:#111"></div>
<div style="left:334.5px;top:487px;width:5px;height:5px;background:#111"></div>
<div style="left:334.5px;top:517.5px;width:5px;height:5px;background:#111"></div>
<div style="left:382.5px;top:487px;width:5px;height:5px;background:#111"></div>
<div style="left:382.5px;top:517.5px;width:5px;height:5px;background:#111"></div>
<div style="left:287.5px;top:502px;width:5px;height:5px;background:#111"></div>
<div style="left:382.5px;top:502px;width:5px;height:5px;background:#111"></div>
<div style="left:796px;top:158px;width:1px;height:509px;background:#a5a7b6"></div>
<div style="left:801px;top:108px;width:250px;height:558px;background:#fff"></div>
<div style="left:801px;top:268px;width:250px;height:16px;background:#007acc"></div>
<span class="t" style="left:801px;top:109.0px;font-size:11px;line-height:14px;color:#1e1e1e;transform:scaleX(0.9796);">]</span>
<span class="t" style="left:810px;top:109.0px;font-size:11px;line-height:14px;color:#1e1e1e;transform:scaleX(0.9573);">Reservations (Page)</span>
<svg style="left:801px;top:127px" width="6" height="9" viewBox="0 0 6 9"><path d="M0.800 1 L4.300 4.500 L0.800 8" fill="none" stroke="#444" stroke-width="1"/></svg>
<svg style="left:811.5px;top:125px" width="11" height="15" viewBox="0 0 11 15"><path d="M1 2.500v9.500c0 1 2 2 4.500 2s4.500-1 4.500-2v-9.500" fill="#ecece6" stroke="#b4b8ac" stroke-width="1"/><ellipse cx="5.500" cy="2.300" rx="4.500" ry="1.900" fill="#8c8c8c" stroke="#9a9a9a" stroke-width="0.800"/><path d="M1 5.800c0 1 2 2 4.500 2s4.500-1 4.500-2M1 9c0 1 2 2 4.500 2s4.500-1 4.500-2" fill="none" stroke="#b4b8ac" stroke-width="1"/></svg>
<span class="t" style="left:829px;top:125.0px;font-size:11px;line-height:14px;color:#1e1e1e;transform:scaleX(0.9914);">RESERVATION (RESERVATION)</span>
<span class="t" style="left:812px;top:140.5px;font-size:12.5px;line-height:16px;color:#222;font-weight:bold;font-family:'Liberation Serif',serif;">A</span>
<span class="t" style="left:829px;top:141.0px;font-size:11px;line-height:14px;color:#1e1e1e;transform:scaleX(0.9694);">${PageTitle} (TitleLabelControl)</span>
<svg style="left:801px;top:159px" width="6" height="9" viewBox="0 0 6 9"><path d="M0.800 1 L4.300 4.500 L0.800 8" fill="none" stroke="#444" stroke-width="1"/></svg>
<svg style="left:809px;top:158px" width="16" height="13" viewBox="0 0 16 13"><rect x="0.500" y="0.500" width="15" height="12" fill="#fff" stroke="#333" stroke-width="1"/><rect x="3.500" y="3.500" width="8.500" height="2" fill="none" stroke="#333" stroke-width="1"/><rect x="3.500" y="8" width="3" height="2" fill="#fff" stroke="#333" stroke-width="1"/><rect x="9" y="8" width="3" height="2" fill="#fff" stroke="#333" stroke-width="1"/></svg>
<span class="t" style="left:829px;top:157.0px;font-size:11px;line-height:14px;color:#1e1e1e;transform:scaleX(0.9447);">SearchGroup (GroupControl)</span>
<svg style="left:801px;top:175px" width="6" height="9" viewBox="0 0 6 9"><path d="M0.800 1 L4.300 4.500 L0.800 8" fill="none" stroke="#444" stroke-width="1"/></svg>
<svg style="left:809px;top:173.5px" width="16" height="13" viewBox="0 0 16 13"><rect x="0.500" y="2.500" width="15" height="8" rx="1" fill="#e4e4e4" stroke="#8c8c8c" stroke-width="1"/></svg>
<span class="t" style="left:829px;top:173.0px;font-size:11px;line-height:14px;color:#1e1e1e;transform:scaleX(0.9504);">Hide or show area (HideAreaControl)</span>
<svg style="left:801px;top:191px" width="6" height="9" viewBox="0 0 6 9"><path d="M0.800 1 L4.300 4.500 L0.800 8" fill="none" stroke="#444" stroke-width="1"/></svg>
<svg style="left:809px;top:190px" width="16" height="13" viewBox="0 0 16 13"><rect x="0.500" y="0.500" width="15" height="12" fill="#fff" stroke="#333" stroke-width="1"/><rect x="3.500" y="3.500" width="8.500" height="2" fill="none" stroke="#333" stroke-width="1"/><rect x="3.500" y="8" width="3" height="2" fill="#fff" stroke="#333" stroke-width="1"/><rect x="9" y="8" width="3" height="2" fill="#fff" stroke="#333" stroke-width="1"/></svg>
<span class="t" style="left:829px;top:189.0px;font-size:11px;line-height:14px;color:#1e1e1e;transform:scaleX(0.9409);">ResultGroup (GroupControl)</span>
<svg style="left:801px;top:207px" width="6" height="9" viewBox="0 0 6 9"><path d="M0.800 1 L4.300 4.500 L0.800 8" fill="none" stroke="#444" stroke-width="1"/></svg>
<svg style="left:809px;top:206px" width="16" height="13" viewBox="0 0 16 13"><rect x="0.500" y="0.500" width="15" height="12" fill="#fff" stroke="#333" stroke-width="1"/><rect x="3.500" y="3.500" width="8.500" height="2" fill="none" stroke="#333" stroke-width="1"/><rect x="3.500" y="8" width="3" height="2" fill="#fff" stroke="#333" stroke-width="1"/><rect x="9" y="8" width="3" height="2" fill="#fff" stroke="#333" stroke-width="1"/></svg>
<span class="t" style="left:829px;top:205.0px;font-size:11px;line-height:14px;color:#1e1e1e;transform:scaleX(0.9434);">DataSetNumbersControlGroup (GroupControl)</span>
<svg style="left:801px;top:223px" width="6" height="9" viewBox="0 0 6 9"><path d="M0.800 1 L4.300 4.500 L0.800 8" fill="none" stroke="#444" stroke-width="1"/></svg>
<svg style="left:809px;top:222px" width="16" height="13" viewBox="0 0 16 13"><rect x="0.500" y="0.500" width="15" height="12" fill="#fff" stroke="#333" stroke-width="1"/><rect x="3.500" y="3.500" width="8.500" height="2" fill="none" stroke="#333" stroke-width="1"/><rect x="3.500" y="8" width="3" height="2" fill="#fff" stroke="#333" stroke-width="1"/><rect x="9" y="8" width="3" height="2" fill="#fff" stroke="#333" stroke-width="1"/></svg>
<span class="t" style="left:829px;top:221.0px;font-size:11px;line-height:14px;color:#1e1e1e;transform:scaleX(0.9662);">NavigateToRelatedPageGroup (GroupControl)</span>
<svg style="left:801px;top:240.5px" width="6" height="7" viewBox="0 0 6 7"><path d="M5 0v6.500h-5z" fill="#111"/></svg>
<svg style="left:809px;top:238px" width="16" height="13" viewBox="0 0 16 13"><rect x="0.500" y="0.500" width="15" height="12" fill="#fff" stroke="#333" stroke-width="1"/><rect x="3.500" y="3.500" width="8.500" height="2" fill="none" stroke="#333" stroke-width="1"/><rect x="3.500" y="8" width="3" height="2" fill="#fff" stroke="#333" stroke-width="1"/><rect x="9" y="8" width="3" height="2" fill="#fff" stroke="#333" stroke-width="1"/></svg>
<span class="t" style="left:829px;top:237.0px;font-size:11px;line-height:14px;color:#1e1e1e;transform:scaleX(0.9445);">BottomButtonGroup (GroupControl)</span>
<svg style="left:819px;top:255px" width="6" height="10" viewBox="0 0 6 10"><path d="M1 1l4 4-4 4z" fill="#fff" stroke="#333" stroke-width="1"/></svg>
<svg style="left:828px;top:253.5px" width="16" height="13" viewBox="0 0 16 13"><rect x="0.500" y="2.500" width="15" height="8" rx="1" fill="#e4e4e4" stroke="#8c8c8c" stroke-width="1"/></svg>
<span class="t" style="left:848px;top:253.0px;font-size:11px;line-height:14px;color:#1e1e1e;transform:scaleX(0.9625);">Save (SaveButtonControl)</span>
<svg style="left:819px;top:271px" width="6" height="10" viewBox="0 0 6 10"><path d="M1 1l4 4-4 4z" fill="#007acc" stroke="#fff" stroke-width="1"/></svg>
<svg style="left:828px;top:269.5px" width="16" height="13" viewBox="0 0 16 13"><rect x="0.500" y="2.500" width="15" height="8" rx="1" fill="#e4e4e4" stroke="#fff" stroke-width="1"/></svg>
<span class="t" style="left:848px;top:269.0px;font-size:11px;line-height:14px;color:#fff;transform:scaleX(0.9690);">Rollback (RollbackButtonControl)</span>
<svg style="left:819px;top:287px" width="6" height="10" viewBox="0 0 6 10"><path d="M1 1l4 4-4 4z" fill="#fff" stroke="#333" stroke-width="1"/></svg>
<svg style="left:828px;top:285.5px" width="16" height="13" viewBox="0 0 16 13"><rect x="0.500" y="2.500" width="15" height="8" rx="1" fill="#e4e4e4" stroke="#8c8c8c" stroke-width="1"/></svg>
<span class="t" style="left:848px;top:285.0px;font-size:11px;line-height:14px;color:#1e1e1e;transform:scaleX(0.9642);">Check (CheckButtonControl)</span>
<svg style="left:819px;top:303px" width="6" height="10" viewBox="0 0 6 10"><path d="M1 1l4 4-4 4z" fill="#fff" stroke="#333" stroke-width="1"/></svg>
<svg style="left:828px;top:301.5px" width="16" height="13" viewBox="0 0 16 13"><rect x="0.500" y="2.500" width="15" height="8" rx="1" fill="#e4e4e4" stroke="#8c8c8c" stroke-width="1"/></svg>
<span class="t" style="left:848px;top:301.0px;font-size:11px;line-height:14px;color:#1e1e1e;transform:scaleX(0.9617);">New (NewButtonControl)</span>
<svg style="left:819px;top:319px" width="6" height="10" viewBox="0 0 6 10"><path d="M1 1l4 4-4 4z" fill="#fff" stroke="#333" stroke-width="1"/></svg>
<svg style="left:828px;top:317.5px" width="16" height="13" viewBox="0 0 16 13"><rect x="0.500" y="2.500" width="15" height="8" rx="1" fill="#e4e4e4" stroke="#8c8c8c" stroke-width="1"/></svg>
<span class="t" style="left:848px;top:317.0px;font-size:11px;line-height:14px;color:#1e1e1e;transform:scaleX(0.9558);">Delete (DeleteButtonControl)</span>
<div style="left:1051px;top:108px;width:3px;height:559px;background:#007acc"></div>
<div style="left:801px;top:650px;width:250px;height:17px;background:#e8e8ed"></div>
<div style="left:843px;top:654px;width:191px;height:9px;background:#a7a9b6"></div>
<svg style="left:804px;top:653px" width="8" height="10" viewBox="0 0 8 10"><path d="M6 1.500 L2 5 L6 8.500Z" fill="#a0a0aa"/></svg>
<svg style="left:1038px;top:653px" width="8" height="10" viewBox="0 0 8 10"><path d="M2 1.500 L6 5 L2 8.500Z" fill="#a0a0aa"/></svg>
<div style="left:3px;top:666px;width:794px;height:1px;background:#a5a7b6"></div>
<span class="t" style="left:6px;top:672.0px;font-size:12px;line-height:16px;color:#fff;transform:scaleX(0.9994);">RollbackButtonControl : RollbackButton</span>
<svg style="left:1036px;top:676px" width="14" height="14" viewBox="0 0 14 14"><path d="M12 2v1M12 5v1M9 5v1M12 8v1M9 8v1M6 8v1M12 11v1M9 11v1M6 11v1M3 11v1" stroke="#7db7e6" stroke-width="1.500"/></svg>
</body></html>
